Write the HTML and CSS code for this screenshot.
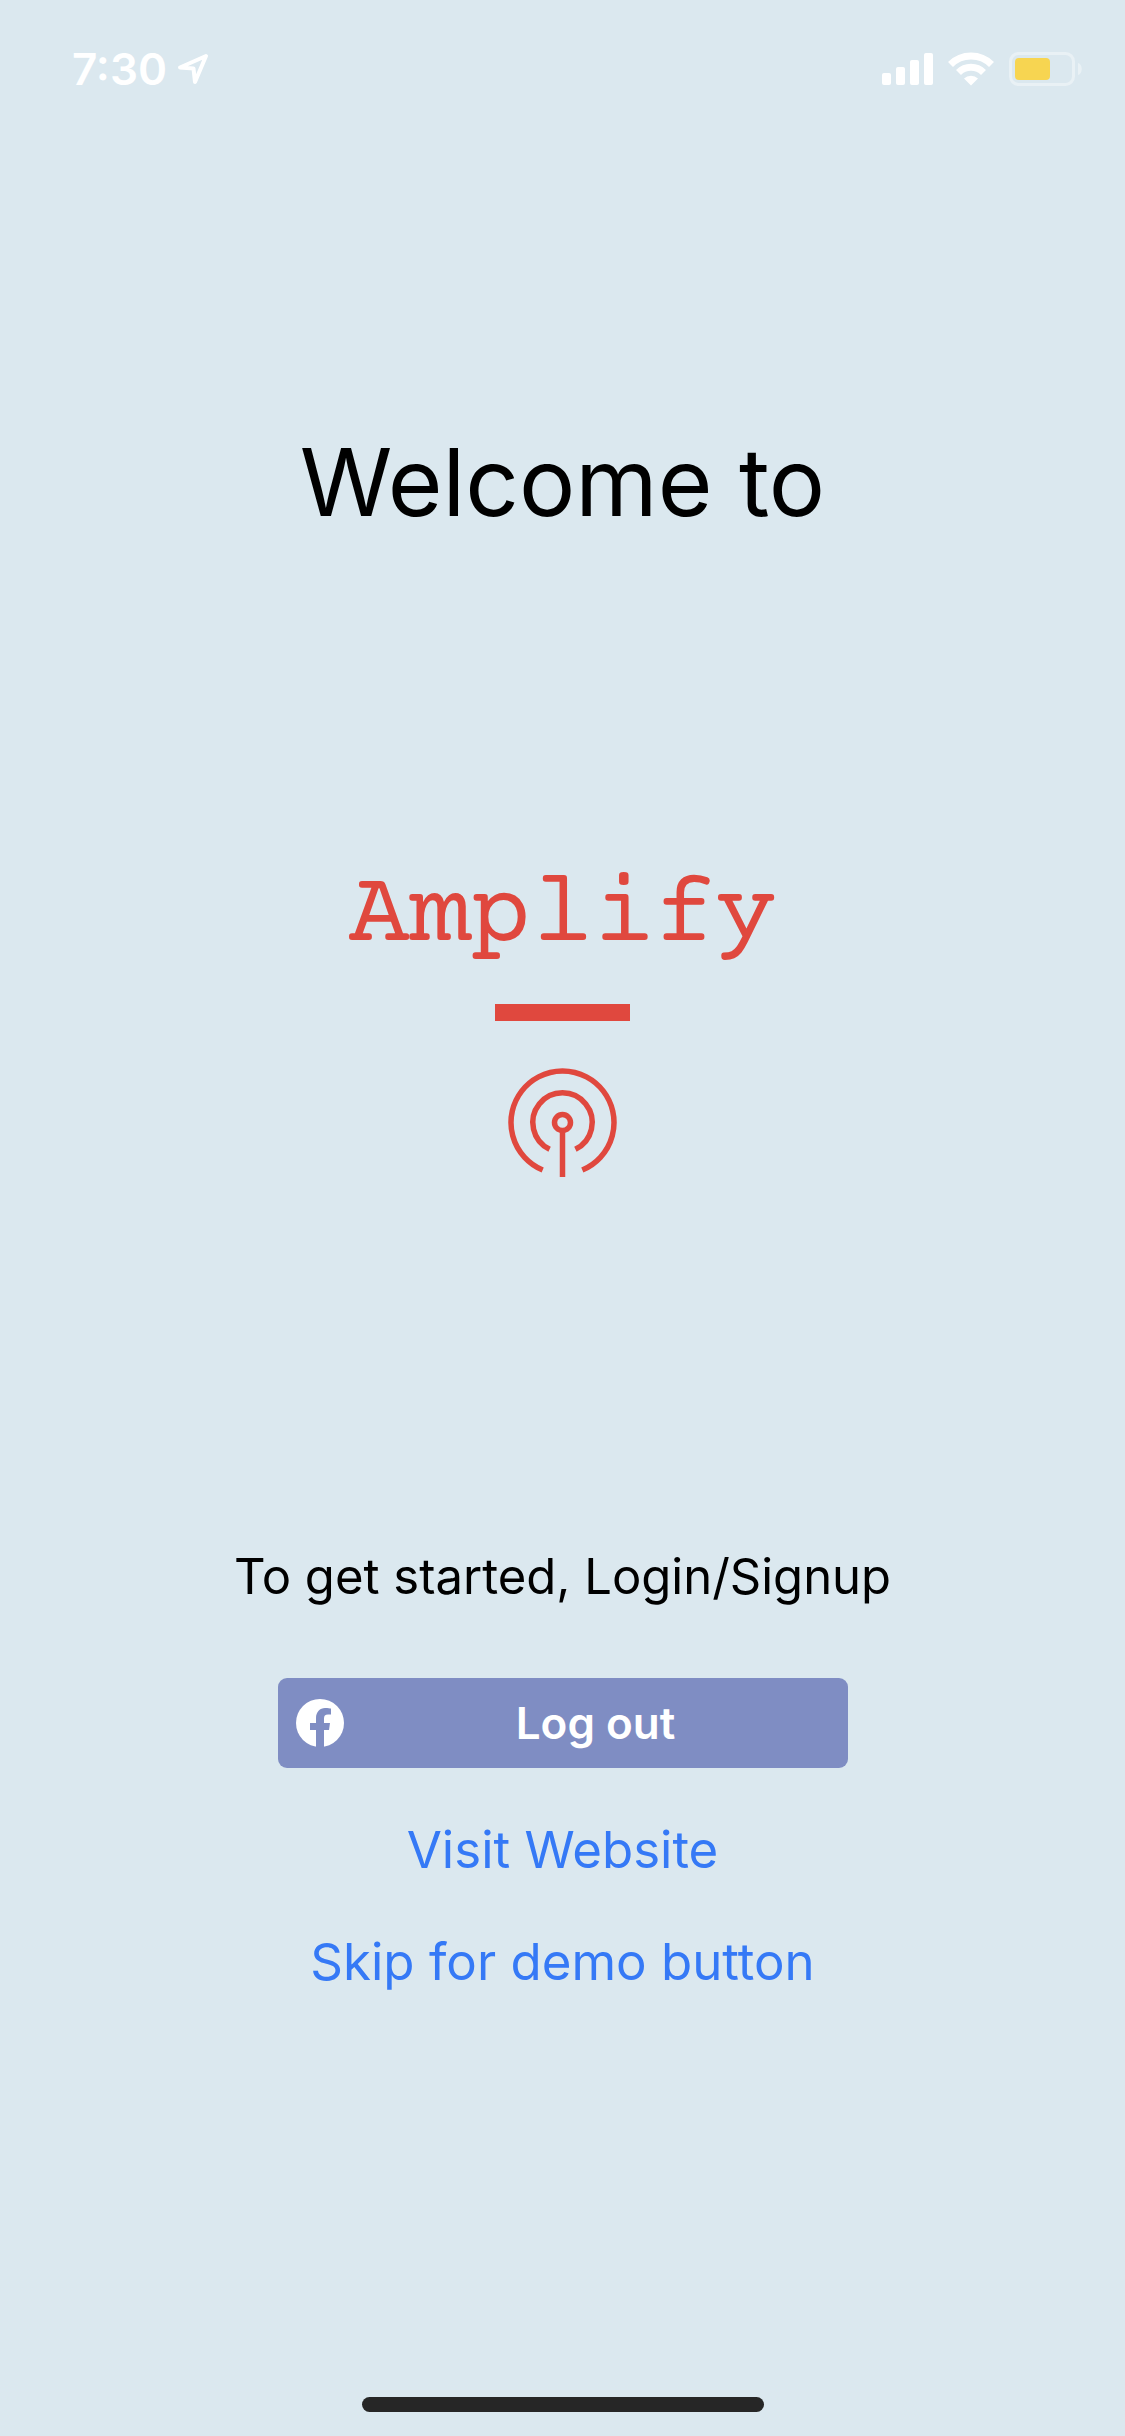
FILE: index.html
```html
<!DOCTYPE html>
<html lang="en">
<head>
<meta charset="utf-8">
<meta name="viewport" content="width=device-width, initial-scale=1">
<title>Amplify</title>
<link rel="stylesheet" href="styles.css">
</head>
<body>
<div class="screen">
  <header class="status">
    <div class="status-group">
      <time class="clock">7:30</time>
      <svg class="arrow" width="32" height="32" viewBox="0 0 32 32" fill="none" stroke="#fff" stroke-width="4" stroke-linejoin="round" aria-hidden="true"><path d="M29 3 3 14.500 16.500 15.500 18 29z"/></svg>
    </div>
    <div class="status-group status-icons">
      <svg width="51" height="34" viewBox="0 0 51 34" fill="#fff" aria-label="Signal"><rect y="21" width="9" height="12" rx="2"/><rect x="14" y="15" width="9" height="18" rx="2"/><rect x="28" y="8" width="9" height="25" rx="2"/><rect x="42" y="1" width="9" height="32" rx="2"/></svg>
      <svg width="46" height="34" viewBox="0 0 46 34" aria-label="Wi-Fi"><g fill="none" stroke="#fff" stroke-width="7"><path d="M2.500 12.500a29 29 0 0 1 41 0"/><path d="M10.500 20.500a17.700 17.700 0 0 1 25 0"/></g><path fill="#fff" d="M16 26.500a10 10 0 0 1 14 0L23 33.500z"/></svg>
      <svg width="74" height="34" viewBox="0 0 74 34" aria-label="Battery"><rect x="1.500" y="1.500" width="63" height="31" rx="8" fill="none" stroke="#e9f1f5" stroke-width="3"/><path d="M69 11c5 1 5 11 0 12z" fill="#e9f1f5"/><rect x="6" y="6" width="35" height="22" rx="4" fill="#f7d551"/></svg>
    </div>
  </header>

  <main class="content">
    <h1 class="title">Welcome to</h1>
    <div class="brand">
      <p class="wordmark">Amplify</p>
      <div class="rule"></div>
      <svg width="109" height="109" viewBox="0 0 109 109" fill="none" stroke="#e0483e" stroke-width="5.500" aria-hidden="true"><circle cx="54.500" cy="54.500" r="8"/><path d="M54.500 62.500V109"/><path d="M41.600 81.300a29.700 29.700 0 1 1 25.800 0"/><path d="M34.700 102a51.500 51.500 0 1 1 39.600 0"/></svg>
    </div>
    <p class="prompt">To get started, Login/Signup</p>
    <button class="login" type="button">
      <svg width="48" height="48" viewBox="0 0 48 48" aria-hidden="true"><circle cx="24" cy="24" r="24" fill="#fff"/><path fill="#7f8dc3" d="M20 49V31h-6v-7h6v-5c0-6 4-10 9-10 3 0 5 .500 6 .500v6h-3c-3 0-4 1.500-4 4V24h6l-1 7h-5v18z"/></svg>
      <span class="login-label">Log out</span>
    </button>
    <a class="link" href="#website">Visit Website</a>
    <a class="link" href="#demo">Skip for demo button</a>
  </main>

  <div class="home-bar"></div>
</div>
</body>
</html>
```
FILE: styles.css
```css
* {
  box-sizing: border-box;
}

body {
  margin: 0;
  background: #dbe8ef;
  color: #000;
  font-family: Inter, "Liberation Sans", sans-serif;
}

.screen {
  display: flex;
  flex-direction: column;
  align-items: center;
  min-height: 100vh;
  padding-bottom: 24px;
}

.status {
  display: flex;
  justify-content: space-between;
  align-items: flex-start;
  width: 100%;
  height: 132px;
  padding: 52px 42px 0 72px;
}

.status-group {
  display: flex;
  align-items: center;
  gap: 10px;
  height: 34px;
}

.status-icons {
  gap: 15px;
}

.clock {
  color: #fff;
  font-size: 44px;
  font-weight: 600;
  line-height: 34px;
}

.content {
  display: flex;
  flex-direction: column;
  align-items: center;
  width: 100%;
  padding: 290px 24px 60px;
}

.title {
  margin: 0;
  font-size: 94px;
  font-weight: 400;
  line-height: 120px;
}

.brand {
  display: flex;
  flex-direction: column;
  align-items: center;
  margin: 316px 0 370px;
}

.wordmark {
  margin: 0;
  color: #e0483e;
  font-family: "Courier Prime", "Liberation Mono", monospace;
  font-size: 102px;
  line-height: 120px;
}

.rule {
  width: 135px;
  height: 17px;
  margin: 26px 0 47px;
  background: #e0483e;
}

.prompt {
  margin: 0 0 71px;
  font-size: 49px;
  line-height: 60px;
}

.login {
  display: flex;
  align-items: center;
  width: 570px;
  max-width: 100%;
  height: 90px;
  padding: 0 0 0 18px;
  border: 0;
  border-radius: 9px;
  background: #7f8dc3;
  color: #fff;
  font: 600 44px/60px Inter, "Liberation Sans", sans-serif;
}

.login-label {
  flex: 1;
  text-align: center;
}

.link {
  margin-top: 52px;
  color: #3579f6;
  font-size: 51px;
  line-height: 60px;
  text-decoration: none;
}

.home-bar {
  width: 402px;
  max-width: 60%;
  height: 15px;
  margin-top: auto;
  border-radius: 8px;
  background: #262626;
}
```
